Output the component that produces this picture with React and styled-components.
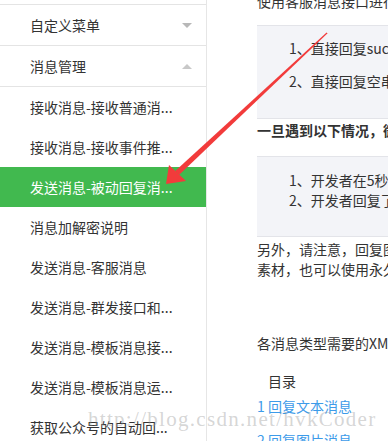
import React from 'react';
import styled, { createGlobalStyle } from 'styled-components';

const GlobalStyle = createGlobalStyle`
  body {
    margin: 0;
    font-family: "Noto Sans CJK SC", "Noto Sans", sans-serif;
    background: #fff;
  }
`;

const Page = styled.div`
  position: relative;
  display: flex;
  width: 388px;
  height: 441px;
  overflow: hidden;
  background: #fff;
  color: #333;
  font-size: 14px;
`;

const Sidebar = styled.div`
  width: 206px;
  flex-shrink: 0;
  padding-top: 4px;
  border-right: 1px solid #e6e6e6;
`;

const GroupHeader = styled.div`
  height: 40px;
  display: flex;
  align-items: center;
  justify-content: space-between;
  padding: 0 14px 0 30px;
  border-top: 1px solid #e4e4e4;
`;

const Caret = styled.span`
  width: 0;
  height: 0;
  border-left: 5px solid transparent;
  border-right: 5px solid transparent;
  border-top: ${p => (p.$up ? 'none' : '5px solid #b8b8b8')};
  border-bottom: ${p => (p.$up ? '5px solid #c8c8c8' : 'none')};
`;

const SubList = styled.div`
  border-top: 1px solid #e4e4e4;
`;

const SubItem = styled.div`
  height: 40px;
  line-height: 40px;
  padding-left: 30px;
  white-space: nowrap;
  background: ${p => (p.$active ? '#41b94f' : 'transparent')};
  color: ${p => (p.$active ? '#fff' : '#333')};
`;

const Content = styled.div`
  flex: 1;
  min-width: 0;
  margin-top: -9px;
  padding-left: 50px;
  overflow: hidden;
`;

const Line = styled.p`
  margin: ${p => p.$top || 0}px 0 0;
  line-height: 20px;
  white-space: nowrap;
  font-weight: ${p => (p.$bold ? 700 : 400)};
`;

const NoteBox = styled.div`
  margin-top: ${p => p.$top}px;
  padding: ${p => p.$pad};
  background: #f3f4f8;
  border-top: 1px solid #e3e4e9;
  border-bottom: 1px solid #e3e4e9;
  display: flex;
  flex-direction: column;
  gap: ${p => p.$gap}px;
`;

const TocTitle = styled.p`
  margin: 18px 0 -2px;
  padding-left: 11px;
  line-height: 20px;
  color: #333;
`;

const TocLink = styled.a`
  display: block;
  line-height: 34px;
  color: #3d9be9;
  text-decoration: none;
  white-space: nowrap;
`;

const Watermark = styled.div`
  position: absolute;
  left: 88px;
  top: 409px;
  font-family: "Liberation Serif", serif;
  font-size: 21px;
  line-height: 21px;
  letter-spacing: 1.3px;
  color: rgba(150, 150, 150, 0.4);
  white-space: nowrap;
  pointer-events: none;
`;

const ArrowLayer = styled.svg`
  position: absolute;
  left: 0;
  top: 0;
  pointer-events: none;
`;

const subItems = [
  '接收消息-接收普通消...',
  '接收消息-接收事件推...',
  '发送消息-被动回复消...',
  '消息加解密说明',
  '发送消息-客服消息',
  '发送消息-群发接口和...',
  '发送消息-模板消息接...',
  '发送消息-模板消息运...',
  '获取公众号的自动回...',
];

export default function App() {
  return (
    <>
      <GlobalStyle />
      <Page>
        <Sidebar>
          <GroupHeader>
            <span>自定义菜单</span>
            <Caret />
          </GroupHeader>
          <GroupHeader>
            <span>消息管理</span>
            <Caret $up />
          </GroupHeader>
          <SubList>
            {subItems.map((t, i) => (
              <SubItem key={t} $active={i === 2}>{t}</SubItem>
            ))}
          </SubList>
        </Sidebar>

        <Content>
          <Line>使用客服消息接口进行异步回复），否则，将出现严重的错误提示。详见下面说明：</Line>
          <NoteBox $top={14} $pad="12px 0 27px 32px" $gap={13}>
            <Line>1、直接回复success（推荐方式）</Line>
            <Line>2、直接回复空串（指字节长度为0的空字符串，而不是XML结构体中content字段的内容为空）</Line>
          </NoteBox>
          <Line $top={1} $bold>一旦遇到以下情况，微信都会在公众号会话中，向用户下发系统提示“该公众号暂时无法提供服务，请稍后再试”：</Line>
          <NoteBox $top={16} $pad="13px 0 26px 32px" $gap={0}>
            <Line>1、开发者在5秒内未回复任何内容</Line>
            <Line>2、开发者回复了异常数据，比如JSON数据等</Line>
          </NoteBox>
          <Line $top={2}>另外，请注意，回复图片（不支持gif动图）等多媒体消息时需要预先通过素材管理接口上传临时</Line>
          <Line>素材，也可以使用永久素材的media_id。</Line>
          <Line $top={54}>各消息类型需要的XML数据包结构如下：</Line>
          <TocTitle>目录</TocTitle>
          <TocLink href="#">1 回复文本消息</TocLink>
          <TocLink href="#">2 回复图片消息</TocLink>
        </Content>

        <Watermark>http://blog.csdn.net/hvkCoder</Watermark>

        <ArrowLayer width="388" height="441" viewBox="0 0 388 441">
          <polygon points="327.6,33.3 179,175 175.2,171 326.6,32.6" fill="#f23b3b" />
          <polygon points="166,184 169,165 186,181" fill="#f23b3b" />
        </ArrowLayer>
      </Page>
    </>
  );
}
